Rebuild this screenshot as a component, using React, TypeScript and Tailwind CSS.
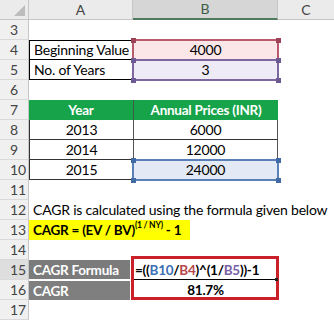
import React from 'react';

interface RowProps {
  n: number;
  selected?: boolean;
  children?: React.ReactNode;
}

const Row: React.FC<RowProps> = ({ n, selected, children }) => {
  return (
    <div className="flex h-[20px]">
      <div
        className={`flex w-[29px] shrink-0 items-center border-r border-b border-r-[#c6c6c6] border-b-[#d9d9d9] pl-[10px] text-[14px] tracking-normal text-[#444] ${
          selected ? 'bg-[#dedede]' : 'bg-[#f0f0f0]'
        }`}
      >
        {n}
      </div>
      <div className="flex flex-1">{children}</div>
    </div>
  );
};

const Handle: React.FC<{ className: string }> = ({ className }) => (
  <div className={`absolute h-[5px] w-[5px] ${className}`} />
);

// bold cell text is a little tighter, Lato bold runs wider than the original
const bold = 'font-bold text-[13.5px] tracking-[-0.25px]';

export default function App() {
  return (
    <div className="relative h-[320px] w-[334px] overflow-hidden bg-white font-[family-name:Lato,sans-serif] text-[14px] leading-[20px] tracking-[-0.2px] text-black">
      {/* column headers */}
      <div className="flex h-[20px] text-[14px] tracking-normal text-[#444]">
        <div className="flex w-[29px] shrink-0 items-end justify-end border-r border-b border-[#c6c6c6] bg-[#ebebeb] pr-[3px] pb-[3px]">
          <svg width="11" height="11" viewBox="0 0 11 11">
            <polygon points="11,0 11,11 0,11" fill="#bdbdbd" />
          </svg>
        </div>
        <div className="flex w-[104px] items-center justify-center border-r border-b border-[#c6c6c6] bg-[#ebebeb]">A</div>
        <div className="flex w-[145px] items-center justify-center border-r border-b-2 border-r-[#c6c6c6] border-b-[#4f7a5e] bg-[#d6d6d6] text-[#3d5e49]">B</div>
        <div className="flex flex-1 items-center justify-center border-b border-[#c6c6c6] bg-[#ebebeb]">C</div>
      </div>

      <Row n={3} />
      <Row n={4}>
        <div className="flex w-[104px] items-center border-y border-l border-black pl-[4px]">Beginning Value</div>
        <div className="flex w-[145px] items-center justify-center bg-[#fbe6e8]">4000</div>
      </Row>
      <Row n={5}>
        <div className="flex w-[104px] items-center border-b border-l border-black pl-[4px]">No. of Years</div>
        <div className="flex w-[145px] items-center justify-center bg-[#eeeaf6]">3</div>
      </Row>
      <Row n={6} />
      <Row n={7}>
        <div className={`flex w-[104px] items-center justify-center bg-[#16a34a] text-white ${bold}`}>Year</div>
        <div className={`flex w-[145px] items-center justify-center border-l border-[#3f5a47] bg-[#16a34a] text-white ${bold}`}>
          Annual Prices (INR)
        </div>
      </Row>
      {[
        ['2013', '6000'],
        ['2014', '12000'],
      ].map(([y, v], i) => (
        <Row key={y} n={8 + i}>
          <div className="flex w-[104px] items-center justify-center border-b border-l border-[#333]">{y}</div>
          <div className="flex w-[145px] items-center justify-center border-x border-b border-x-[#555] border-b-[#333]">{v}</div>
        </Row>
      ))}
      <Row n={10}>
        <div className="flex w-[104px] items-center justify-center border-b border-l border-[#333]">2015</div>
        <div className="flex w-[145px] items-center justify-center bg-[#e3eaf5]">24000</div>
      </Row>
      <Row n={11} />
      <Row n={12}>
        <div className="flex items-center whitespace-nowrap pl-[4px]">CAGR is calculated using the formula given below</div>
      </Row>
      <Row n={13}>
        <div className={`flex w-[161px] items-center whitespace-nowrap bg-[#ffff00] pl-[4px] ${bold}`}>
          CAGR = (EV / BV)
          <span className="relative -top-[5px] text-[8.5px] leading-none">(1 / NY)</span>
          &nbsp;- 1
        </div>
      </Row>
      <Row n={14} />
      <Row n={15} selected>
        <div className={`flex w-[101px] items-center border-b border-white bg-[#7b7b7b] pl-[4px] text-white ${bold}`}>CAGR Formula</div>
        <div className="w-[3px]" />
        <div className={`flex w-[143px] items-center whitespace-nowrap border-b border-black pl-[2px] ${bold}`}>
          <span>=((</span>
          <span className="text-[#3b6fb5]">B10</span>
          <span>/</span>
          <span className="text-[#b7474c]">B4</span>
          <span>)^(1/</span>
          <span className="text-[#7b5fa6]">B5</span>
          <span>))-1</span>
        </div>
      </Row>
      <Row n={16}>
        <div className={`flex w-[101px] items-center border-t border-white bg-[#7f7f7f] pl-[4px] text-white ${bold}`}>CAGR</div>
        <div className="w-[3px]" />
        <div className={`flex w-[145px] items-center justify-center ${bold}`}>81.7%</div>
      </Row>
      <Row n={17} />

      {/* reference highlight frames */}
      <div className="absolute left-[132px] top-[39px] h-[22px] w-[147px] border-2 border-[#b85a6b]" />
      <div className="absolute left-[132px] top-[59px] h-[22px] w-[147px] border-2 border-[#7e67a0]" />
      <div className="absolute left-[132px] top-[159px] h-[22px] w-[147px] border-2 border-[#5a80b8]" />
      <Handle className="left-[131px] top-[38px] bg-[#9c4358]" />
      <Handle className="left-[276px] top-[38px] bg-[#9c4358]" />
      <Handle className="left-[131px] top-[58px] bg-[#6e5a92]" />
      <Handle className="left-[276px] top-[58px] bg-[#6e5a92]" />
      <Handle className="left-[131px] top-[78px] bg-[#6e5a92]" />
      <Handle className="left-[276px] top-[78px] bg-[#6e5a92]" />
      <Handle className="left-[131px] top-[158px] bg-[#416aa6]" />
      <Handle className="left-[276px] top-[158px] bg-[#416aa6]" />
      <Handle className="left-[131px] top-[178px] bg-[#416aa6]" />
      <Handle className="left-[276px] top-[178px] bg-[#416aa6]" />

      {/* annotation box */}
      <div className="absolute left-[131px] top-[256px] h-[44px] w-[148px] border-[3px] border-[#c9202a]" />
      <div className="absolute left-[275px] top-[278px] h-[3px] w-[3px] bg-[#222]" />
    </div>
  );
}
